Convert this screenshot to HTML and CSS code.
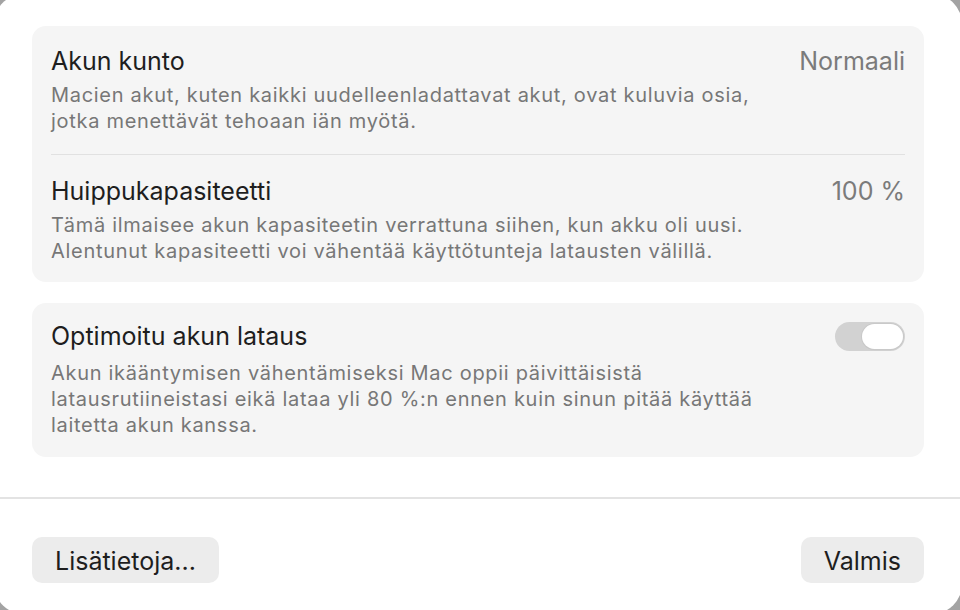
FILE: index.html
```html
<!DOCTYPE html>
<html lang="fi">
<head>
<meta charset="utf-8">
<title>Akun kunto</title>
<link rel="stylesheet" href="styles.css">
</head>
<body>
<div class="dialog">
  <div class="content">
    <section class="card">
      <div class="row">
        <div class="head">
          <span class="title">Akun kunto</span>
          <span class="value">Normaali</span>
        </div>
        <p class="desc">Macien akut, kuten kaikki uudelleenladattavat akut, ovat kuluvia osia,<br>jotka menettävät tehoaan iän myötä.</p>
      </div>
      <div class="sep"></div>
      <div class="row row-last">
        <div class="head">
          <span class="title">Huippukapasiteetti</span>
          <span class="value">100 %</span>
        </div>
        <p class="desc">Tämä ilmaisee akun kapasiteetin verrattuna siihen, kun akku oli uusi.<br>Alentunut kapasiteetti voi vähentää käyttötunteja latausten välillä.</p>
      </div>
    </section>
    <section class="card">
      <div class="row row-toggle">
        <div class="head">
          <span class="title">Optimoitu akun lataus</span>
          <span class="toggle"><span class="knob"></span></span>
        </div>
        <p class="desc">Akun ikääntymisen vähentämiseksi Mac oppii päivittäisistä<br>latausrutiineistasi eikä lataa yli 80 %:n ennen kuin sinun pitää käyttää<br>laitetta akun kanssa.</p>
      </div>
    </section>
  </div>
  <div class="divider"></div>
  <div class="footer">
    <button class="btn">Lisätietoja...</button>
    <button class="btn btn-done">Valmis</button>
  </div>
</div>
</body>
</html>
```

FILE: styles.css
```css
html, body {
  margin: 0;
  padding: 0;
  height: 610px;
  overflow: hidden;
  background: #a3a3a3;
}

body {
  font-family: Inter, "Noto Sans", "Liberation Sans", sans-serif;
  -webkit-font-smoothing: antialiased;
}

.dialog {
  margin: -6px -2px 0 -6px;
  height: 620px;
  background: #ffffff;
  border-radius: 30px;
  display: flex;
  flex-direction: column;
}

.content {
  padding: 32px 38px 0;
  display: flex;
  flex-direction: column;
  gap: 21px;
}

.card {
  background: #f5f5f5;
  border-radius: 14px;
  padding: 0 19px;
}

.row {
  padding: 20px 0 20px;
}

.row-last {
  padding: 21px 0 18px;
}

.row-toggle {
  padding: 18px 0 19px;
}

.head {
  display: flex;
  justify-content: space-between;
  align-items: center;
  height: 30px;
}

.title {
  font-size: 25px;
  line-height: 30px;
  color: #1e1e1e;
}

.value {
  font-size: 25px;
  line-height: 30px;
  color: #7b7b7b;
}

.desc {
  margin: 6px 0 0;
  font-size: 20px;
  line-height: 26px;
  letter-spacing: 0.7px;
  color: #777777;
}

.row-toggle .desc {
  margin-top: 9px;
}

.sep {
  height: 1px;
  background: #e1e1e1;
}

.toggle {
  width: 70px;
  height: 29px;
  border-radius: 15px;
  background: #d2d2d2;
  display: flex;
  align-items: center;
  justify-content: flex-end;
  padding: 0 2px;
  box-sizing: border-box;
}

.knob {
  width: 41px;
  height: 25px;
  border-radius: 13px;
  background: #ffffff;
  box-shadow: 0 0 0 1px #c9c9c9, 0 1px 1px rgba(0,0,0,0.08);
}

.divider {
  margin-top: 40px;
  height: 2px;
  background: #e3e3e3;
}

.footer {
  display: flex;
  justify-content: space-between;
  padding: 38px 38px 0;
}

.btn {
  font-family: Inter, "Noto Sans", "Liberation Sans", sans-serif;
  height: 46px;
  padding: 2px 23px 0;
  border: none;
  border-radius: 10px;
  background: #ececec;
  color: #1e1e1e;
  font-size: 25px;
  line-height: 30px;
}

.btn-done {
  padding: 2px 23px 0 23px;
}
```
